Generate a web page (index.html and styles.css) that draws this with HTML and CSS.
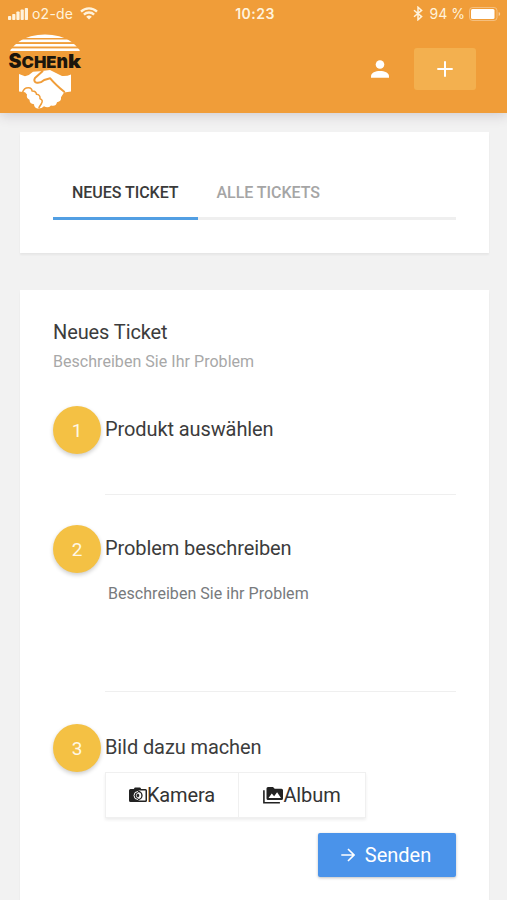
FILE: index.html
```
<!DOCTYPE html>
<html lang="de">
<head>
  <meta charset="UTF-8">
  <title>Neues Ticket</title>
  <meta name="viewport" content="width=device-width, initial-scale=1">
  <link rel="stylesheet" href="styles.css">
</head>
<body>
  <header class="header">
    <div class="status">
      <div class="status-left">
        <svg width="20" height="12" viewBox="0 0 20 12" fill="currentColor">
          <rect x="0" y="8" width="3.200" height="4" rx=".8"/>
          <rect x="4.200" y="6" width="3.200" height="6" rx=".8"/>
          <rect x="8.400" y="3.500" width="3.200" height="8.500" rx=".8"/>
          <rect x="12.600" y="1.500" width="3.200" height="10.500" rx=".8"/>
          <rect x="16.800" y="0" width="3.200" height="12" rx=".8"/>
        </svg>
        <span class="carrier"><svg width="42" height="18"><text x="0" y="14" textLength="41">o2-de</text></svg></span>
        <svg class="wifi" width="18" height="13" viewBox="0 0 18 13" fill="none" stroke="currentColor" stroke-width="2.3">
          <path d="M1 4.6a11.4 11.4 0 0 1 16 0"/>
          <path d="M3.9 7.6a7.2 7.2 0 0 1 10.2 0"/>
          <path d="M9 12.6 6.2 9.8a4 4 0 0 1 5.6 0z" fill="currentColor" stroke="none"/>
        </svg>
      </div>
      <span class="time">10:23</span>
      <div class="status-right">
        <svg width="10" height="15" viewBox="0 0 10 15" fill="none" stroke="currentColor" stroke-width="1.5">
          <path d="M1 4.2 8.600 10.6 5 13.8V1.2l3.6 3.2L1 10.8"/>
        </svg>
        <span class="percent">94 %</span>
        <svg width="32" height="14" viewBox="0 0 32 14">
          <rect x=".5" y=".5" width="27.5" height="13" rx="3" fill="none" stroke="#fff" stroke-opacity=".35"/>
          <rect x="2" y="2" width="23.5" height="10" rx="1.5" fill="#fff"/>
          <path d="M29.7 5v4q1.5-.6 1.5-2t-1.5-2z" fill="#fff" fill-opacity=".5"/>
        </svg>
      </div>
    </div>
    <div class="toolbar">
      <svg class="logo" width="76" height="76" viewBox="0 0 76 76">
        <!-- striped sun -->
        <clipPath id="sun"><ellipse cx="37" cy="25" rx="37" ry="24.500"/></clipPath>
        <g clip-path="url(#sun)" fill="#fff">
          <rect x="0" y="0" width="76" height="4"/>
          <rect x="0" y="5.500" width="76" height="2.600"/>
          <rect x="0" y="10" width="76" height="2.500"/>
          <rect x="0" y="14.400" width="76" height="2.600"/>
        </g>
        <g class="logo-text">
          <text x="0.6" y="34.400" font-size="19.500" textLength="13" lengthAdjust="spacingAndGlyphs">S</text>
          <text x="13.500" y="34" font-size="16.500" textLength="35" lengthAdjust="spacingAndGlyphs">CHE</text>
          <text x="48.500" y="34" font-size="20" textLength="11.500" lengthAdjust="spacingAndGlyphs">n</text>
          <text x="60" y="34" font-size="18.500" textLength="13" lengthAdjust="spacingAndGlyphs">k</text>
        </g>
        <!-- handshake -->
        <path fill="#fff" d="M11 40l6 2.2q4-.4 8-4.400l7-.6 10-1.200 12 6q5 .4 9-1.600V57.600l-7 .8-3 4.800q.8 4-4 5-1 4.600-6 3.200-3 3.400-7 .8-2 2.400-6.500 2.200-3.500-.6-3.500-4.200-4.500-.2-4.500-4.400-3.500-1.600-2.500-5.300L17 58.200l-6-.8z"/>
        <g fill="none" stroke="#f09d39" stroke-linecap="round" stroke-linejoin="round" stroke-width="2">
          <path d="M34.500 37.200l-7.500 6.800q-1.800 3.200 1.200 4.600 4 1 8-2.600l6-1.700q5 6 14 13.500"/>
          <path d="M14.500 58.500q1.500-5 6-4.800 3.500.2 3.500 3.300 4-.2 4.500 3.300 4 .4 3.500 4.400 3.500 1.300 1.500 4.800l-2.500 4" stroke-width="1.500"/>
        </g>
      </svg>
      <div class="actions">
        <svg class="user" width="24" height="24" viewBox="0 0 24 24" fill="#fff">
          <circle cx="12" cy="7.500" r="4.300"/>
          <path d="M3 20.800v-1.500c0-3.600 4.500-5.300 9-5.300s9 1.700 9 5.300v1.500z"/>
        </svg>
        <button class="add-btn" type="button" aria-label="Neues Ticket">
          <svg width="16" height="16" viewBox="0 0 16 16" stroke="#fff" stroke-width="2">
            <path d="M8 .3v15.400M.3 8h15.400"/>
          </svg>
        </button>
      </div>
    </div>
  </header>

  <main class="content">
    <section class="card tabs-card">
      <nav class="tabs">
        <a class="tab active">NEUES TICKET</a>
        <a class="tab">ALLE TICKETS</a>
      </nav>
    </section>

    <section class="card ticket-card">
      <h1>Neues Ticket</h1>
      <p class="subtitle">Beschreiben Sie Ihr Problem</p>

      <div class="step step-product">
        <div class="badge">1</div>
        <div class="step-body">
          <h2>Produkt auswählen</h2>
        </div>
      </div>

      <div class="step step-problem">
        <div class="badge">2</div>
        <div class="step-body">
          <h2>Problem beschreiben</h2>
          <p class="placeholder">Beschreiben Sie ihr Problem</p>
        </div>
      </div>

      <div class="step step-image">
        <div class="badge">3</div>
        <div class="step-body">
          <h2>Bild dazu machen</h2>
          <div class="btn-group">
            <button class="btn camera" type="button">
              <svg width="18" height="16" viewBox="0 0 18 16">
                <path fill="#222" d="M1.500 2h3.300l1-1.500h5.400l1 1.500h4.300Q18 2 18 3.500v10q0 1.500-1.500 1.500h-15Q0 15 0 13.500v-10Q0 2 1.500 2z"/>
                <path fill="#fff" d="M9.500 3.500h7v10h-7z"/>
                <circle cx="9" cy="8.500" r="4" fill="#222" stroke="#fff" stroke-width="1"/>
                <path fill="#fff" d="M9 4.700a3.800 3.800 0 0 1 0 7.600z"/>
                <ellipse cx="9" cy="8.500" rx="1.600" ry="2.300" fill="#222" stroke="#fff" stroke-width=".8"/>
                <path d="M9 4.500a4 4 0 0 1 0 8" fill="none" stroke="#222" stroke-width="1.300"/>
              </svg>Kamera</button>
            <button class="btn album" type="button">
              <svg width="20" height="17" viewBox="0 0 20 17">
                <path fill="#222" d="M5 0h5l1.700 1.800H18.500Q20 1.800 20 3.300v8.200Q20 13 18.500 13H5Q3.500 13 3.500 11.500v-10Q3.500 0 5 0z"/>
                <path fill="#fff" d="M5.500 11l3.300-4.600 2.300 2.800 3-3.900L18 11z"/>
                <path fill="none" stroke="#222" stroke-width="1.600" d="M.9 3.200v12.600h16"/>
              </svg>Album</button>
          </div>
        </div>
      </div>

      <div class="footer">
        <button class="send-btn" type="button">
          <svg width="14" height="14" viewBox="0 0 14 14" fill="none" stroke="#fff" stroke-width="1.600">
            <path d="M.3 7h12.500M7 1l6 6-6 6"/>
          </svg>
          Senden
        </button>
      </div>
    </section>
  </main>
</body>
</html>
```
FILE: styles.css
```
:root {
  --orange: #f09d39;
  --yellow: #f4c144;
  --blue: #4a93ea;
  --line: #efefef;
  --text: #3c3c3c;
}
* { box-sizing: border-box; }
body {
  margin: 0;
  height: 900px;
  overflow: hidden;
  background: #f2f2f2;
  font-family: Roboto, "Liberation Sans", sans-serif;
  color: var(--text);
}
h1, h2, p { margin: 0; font-weight: 400; }
svg { display: block; flex: none; }
button { font-family: inherit; border: none; padding: 0; }

.header {
  height: 113px;
  background: var(--orange);
  box-shadow: 0 2px 12px rgba(60,40,60,.2);
}
.status {
  display: grid;
  grid-template-columns: 1fr auto 1fr;
  align-items: center;
  height: 27px;
  padding: 0 6px 0 8px;
  color: #fff3dc;
  font-family: Inter, sans-serif;
  font-size: 14px;
}
.status-left, .status-right { display: flex; align-items: center; }
.status-right { justify-content: flex-end; }
.carrier { margin-left: 4px; fill: currentColor; }
.wifi { margin-left: 6px; }
.time { font-weight: 600; letter-spacing: .5px; margin-left: 1px; }
.percent { margin: 0 4px 0 7px; }
.toolbar {
  display: flex;
  justify-content: space-between;
  padding: 7px 31px 0 8px;
}
.logo-text {
  font-family: Inter, sans-serif;
  font-weight: 900;
  fill: #1c160c;
}
.actions {
  display: flex;
  align-items: center;
  height: 42px;
  margin-top: 14px;
}
.user { margin-right: 22px; }
.add-btn {
  display: flex;
  align-items: center;
  justify-content: center;
  width: 62px;
  height: 42px;
  border-radius: 3px;
  background: #f3b04f;
}

.content { padding: 19px 18px 0 20px; }
.card {
  background: #fff;
  box-shadow: 0 2px 2px rgba(0,0,0,.05);
}
.tabs-card {
  height: 121px;
  margin-bottom: 37px;
  padding: 33px 33px 0;
}
.tabs {
  display: flex;
  height: 55px;
  border-bottom: 3px solid var(--line);
}
.tab {
  height: 55px;
  padding: 18px 19px 0;
  font-size: 16px;
  line-height: 20px;
  font-weight: 500;
  letter-spacing: -.04px;
  color: #a5a5a5;
}
.tab.active {
  color: #3a3a3a;
  border-bottom: 3px solid #529fe3;
}

.ticket-card {
  height: 640px;
  padding: 30px 33px 0;
}
h1 { font-size: 20px; line-height: 24px; letter-spacing: -.1px; }
.subtitle {
  margin-top: 8px;
  font-size: 16px;
  line-height: 20px;
  letter-spacing: .04px;
  color: #a8a8a8;
}
.step { display: flex; gap: 4px; }
.step-product { height: 119px; margin-top: 34px; }
.step-problem { height: 199px; }
.step-body { flex: 1; padding: 11px 0 0; }
.step-product .step-body { height: 89px; border-bottom: 1px solid var(--line); }
.step-problem .step-body { height: 167px; border-bottom: 1px solid var(--line); }
.step h2 { font-size: 20px; line-height: 24px; letter-spacing: -.1px; }
.badge {
  width: 48px;
  height: 48px;
  flex: none;
  border-radius: 50%;
  background: var(--yellow);
  box-shadow: 0 2px 4px rgba(0,0,0,.2);
  color: #fff8e6;
  font-size: 19px;
  line-height: 49px;
  text-align: center;
}
.placeholder {
  margin: 24px 0 0 3px;
  font-size: 16px;
  line-height: 20px;
  letter-spacing: .04px;
  color: #777a7d;
}
.btn-group {
  display: inline-flex;
  height: 46px;
  margin-top: 13px;
  border: 1px solid #f0f0f0;
  box-shadow: 0 2px 3px rgba(0,0,0,.07);
}
.btn {
  display: flex;
  align-items: center;
  justify-content: center;
  background: #fff;
  color: #333;
  font-size: 20px;
  letter-spacing: -.1px;
}
.camera { width: 133px; border-right: 1px solid #f0f0f0; }
.album { width: 126px; }
.footer {
  display: flex;
  justify-content: flex-end;
  margin-top: 15px;
}
.send-btn {
  display: flex;
  align-items: center;
  justify-content: center;
  gap: 10px;
  width: 138px;
  height: 44px;
  padding-right: 2px;
  border-radius: 2px;
  background: var(--blue);
  box-shadow: 0 1px 3px rgba(0,0,0,.25);
  color: #fff;
  font-size: 20px;
}
```
